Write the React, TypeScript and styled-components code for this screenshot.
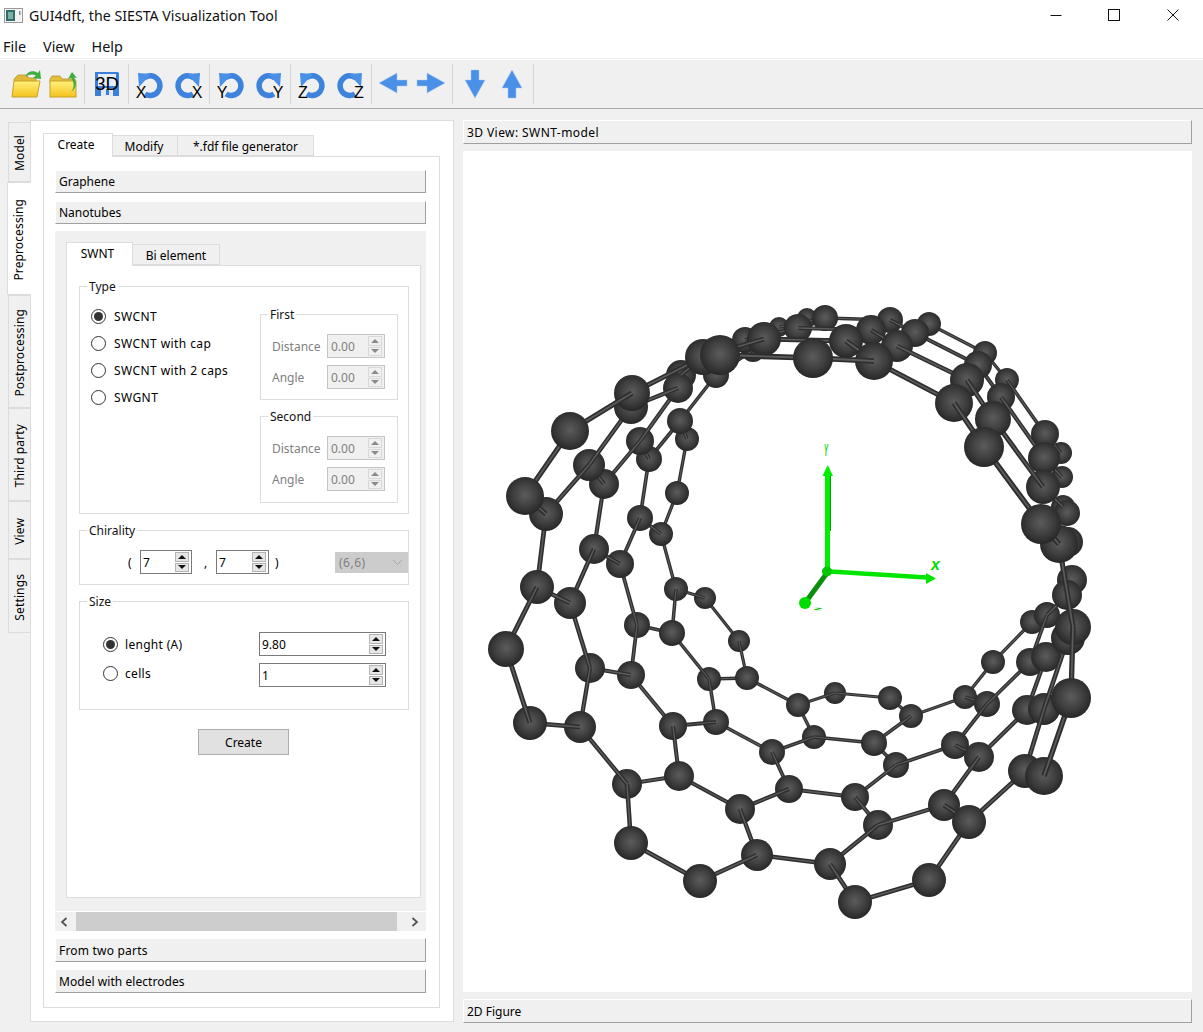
import React from "react";
import styled, { createGlobalStyle } from "styled-components";

const Global = createGlobalStyle`
  html, body { margin: 0; padding: 0; background: #f0f0f0; }
  body { font-family: "Noto Sans", "Open Sans", sans-serif; font-size: 12px; color: #000; }
`;

const Root = styled.div`
  width: 1203px; height: 1032px; display: flex; flex-direction: column; overflow: hidden; background: #f0f0f0;
`;
const TitleBar = styled.div`
  height: 34px; background: #fff; display: flex; align-items: center; padding: 0 1px 4px 4px; box-sizing: border-box;
`;
const TitleText = styled.span`
  font-size: 14.2px; margin-left: 6px; flex: 1; color: #111;
`;
const WinButton = styled.div`
  width: 58.5px; height: 30px; display: flex; align-items: center; justify-content: center;
`;
const MenuBar = styled.div`
  height: 25px; background: #fff; display: flex; gap: 17px; padding: 0 0 0 3px; align-items: center; border-bottom: 1px solid #f0f0f0; box-sizing: border-box; font-size: 14.4px; color: #111;
`;
const ToolBar = styled.div`
  height: 50px; box-sizing: border-box; border-bottom: 1px solid #a9a9a9; border-top: 1px solid #fff; display: flex; align-items: center; background: #f0f0f0;
`;
const ToolGroup = styled.div<{ $w: number; $pl?: number }>`
  width: ${(p) => p.$w}px; box-sizing: border-box; padding-left: ${(p) => p.$pl ?? 0}px; display: flex; justify-content: center;
`;
const ToolCell = styled.div<{ $w: number }>`
  width: ${(p) => p.$w}px; height: 36px; display: flex; justify-content: center;
`;
const ToolSep = styled.div`
  width: 1px; height: 40px; background: #d6d6d6;
`;
const Main = styled.div`
  flex: 1; display: flex; padding: 11px 11px 0 0; min-height: 0;
`;
const VTabs = styled.div`
  width: 30px; padding-top: 2px; box-sizing: border-box; display: flex; flex-direction: column; align-items: flex-end; flex: none;
`;
const VTab = styled.div<{ $h: number; $active?: boolean }>`
  height: ${(p) => p.$h}px; width: ${(p) => (p.$active ? 24 : 22)}px; box-sizing: border-box;
  background: ${(p) => (p.$active ? "#fff" : "#f0f0f0")};
  border: 1px solid #dcdcdc; border-right: ${(p) => (p.$active ? "1px solid #fff" : "none")};
  margin-right: ${(p) => (p.$active ? "-1px" : "0")};
  position: relative; z-index: ${(p) => (p.$active ? 2 : 0)};
  display: flex; align-items: center; justify-content: center; padding-top: 2px;
`;
const VLabel = styled.span`
  writing-mode: vertical-rl; transform: rotate(180deg); white-space: nowrap; font-size: 12px; line-height: 14px; letter-spacing: 0.12px;
`;
const OuterPane = styled.div`
  width: 424px; height: 902px; box-sizing: border-box; background: #fff; border: 1px solid #dcdcdc; padding: 12px 13px 13px 12px; flex: none; display: flex; flex-direction: column;
`;
const TabBar = styled.div`
  display: flex; align-items: flex-end; height: 23px; flex: none;
`;
const Tab = styled.div<{ $w: number; $active?: boolean; $pr?: number }>`
  width: ${(p) => p.$w}px; height: ${(p) => (p.$active ? 24 : 21)}px; box-sizing: border-box;
  background: ${(p) => (p.$active ? "#fff" : "#f0f0f0")};
  border: 1px solid #dcdcdc; border-bottom: ${(p) => (p.$active ? "none" : "1px solid #dcdcdc")};
  border-left: ${(p) => (p.$active ? "1px solid #dcdcdc" : "none")};
  display: flex; align-items: center; justify-content: center; margin-bottom: ${(p) => (p.$active ? "-1px" : "0")};
  position: relative; z-index: ${(p) => (p.$active ? 2 : 0)};
  padding-bottom: ${(p) => (p.$active ? 3 : 0)}px; padding-right: ${(p) => p.$pr ?? 0}px; padding-top: ${(p) => (p.$active ? 0 : 1)}px; white-space: nowrap;
`;
const CreatePane = styled.div`
  flex: 1; border: 1px solid #dcdcdc; background: #fff; padding: 13px 13px 13px 11px; display: flex; flex-direction: column; gap: 7px; min-height: 0;
`;
const BarButton = styled.div<{ $h: number; $mb?: number; $ls?: number }>`
  height: ${(p) => p.$h}px; box-sizing: border-box; flex: none; background: #f0f0f0;
  border-right: 1px solid #a0a0a0; border-bottom: 1px solid #a0a0a0; border-top: 1px solid #fff; border-left: 1px solid #fff;
  margin-bottom: ${(p) => p.$mb ?? 0}px; padding-left: 3px; display: flex; align-items: center; white-space: nowrap;
  letter-spacing: ${(p) => p.$ls ?? 0}px;
`;
const ScrollArea = styled.div`
  height: 700px; flex: none; display: flex; flex-direction: column; background: #f0f0f0;
`;
const ScrollContent = styled.div`
  height: 680px; box-sizing: border-box; padding: 11px 5px 13px 11px; display: flex; flex-direction: column;
`;
const NanoPane = styled.div`
  flex: 1; background: #fff; border: 1px solid #dcdcdc; padding: 12px 0 0 12px; display: flex; flex-direction: column; gap: 8px; width: 355px; box-sizing: border-box;
`;
const Group = styled.fieldset<{ $w: number; $h: number; $pt?: number }>`
  width: ${(p) => p.$w}px; height: ${(p) => p.$h}px; box-sizing: border-box; margin: 0; padding: ${(p) => p.$pt ?? 0}px 0 0 0; border: 1px solid #dcdcdc; min-width: 0; flex: none;
`;
const Legend = styled.legend<{ $ml?: number }>`
  margin-left: ${(p) => p.$ml ?? 7}px; padding: 0 2px; font-size: 12px; line-height: 18px; height: 16px; color: #111;
`;
const TypeBody = styled.div`
  display: flex; height: 100%;
`;
const RadioColumn = styled.div`
  width: 180px; padding: 9px 0 0 11px; box-sizing: border-box; display: flex; flex-direction: column; flex: none;
`;
const RadioRow = styled.div<{ $h: number; $pb?: number; $gap?: number; $ls?: number }>`
  height: ${(p) => p.$h}px; display: flex; align-items: center; gap: ${(p) => p.$gap ?? 8}px; white-space: nowrap; flex: none; padding-bottom: ${(p) => p.$pb ?? 0}px; box-sizing: border-box;
  letter-spacing: ${(p) => p.$ls ?? 0.42}px;
`;
const Radio = styled.span<{ $on?: boolean }>`
  width: 15px; height: 15px; box-sizing: border-box; border: 1px solid #333; border-radius: 50%; background: #fff; display: flex; align-items: center; justify-content: center; flex: none;
  &::after { content: ""; width: 9px; height: 9px; border-radius: 50%; background: ${(p) => (p.$on ? "#333" : "transparent")}; }
`;
const SubColumn = styled.div`
  display: flex; flex-direction: column; gap: 8px; padding-top: 12px; flex: none;
`;
const SubRow = styled.div`
  display: flex; align-items: center; height: 24px; padding-left: 11px; color: #808080;
`;
const SubLabel = styled.span`
  width: 55px; flex: none;
`;
const SubRows = styled.div`
  display: flex; flex-direction: column; gap: 7px;
`;
const SpinBox = styled.div<{ $w: number; $h?: number; $off?: boolean }>`
  width: ${(p) => p.$w}px; height: ${(p) => p.$h ?? 24}px; box-sizing: border-box; flex: none;
  border: 1px solid ${(p) => (p.$off ? "#c4c4c4" : "#7a7a7a")}; background: ${(p) => (p.$off ? "#f0f0f0" : "#fff")};
  color: ${(p) => (p.$off ? "#808080" : "#000")}; display: flex; align-items: center; justify-content: space-between; padding: 1px 1px 1px ${(p) => (p.$off ? 3 : 2)}px;
`;
const SpinButtons = styled.div`
  display: flex; flex-direction: column; gap: 1px; width: 14px; height: 100%; flex: none; margin-right: 1px;
`;
const SpinBtn = styled.div<{ $off?: boolean; $down?: boolean }>`
  flex: 1; box-sizing: border-box; border: 1px solid ${(p) => (p.$off ? "#d8d8d8" : "#b4b4b4")}; background: ${(p) => (p.$off ? "#f0f0f0" : "#e6e6e6")};
  display: flex; align-items: center; justify-content: center;
  &::after { content: ""; width: 0; height: 0; border-left: 4px solid transparent; border-right: 4px solid transparent;
    ${(p) => (p.$down ? "border-top" : "border-bottom")}: 4px solid ${(p) => (p.$off ? "#8a8a8a" : "#111")}; }
`;
const ChiralRow = styled.div`
  display: flex; align-items: center; padding: 12px 0 0 48px; height: 24px;
`;
const Paren = styled.span<{ $w: number; $pl?: number }>`
  width: ${(p) => p.$w}px; padding-left: ${(p) => p.$pl ?? 0}px; box-sizing: border-box; flex: none;
`;
const Combo = styled.div`
  width: 73px; height: 21px; box-sizing: border-box; background: #cccccc; color: #808080; display: flex; align-items: center; justify-content: space-between; padding: 0 5px 0 4px; flex: none; letter-spacing: 0.5px;
`;
const SizeBody = styled.div`
  padding: 23px 0 0 23px; display: flex; flex-direction: column; gap: 7px;
`;
const SizeRow = styled.div`
  display: flex; align-items: center; height: 24px;
`;
const SizeLabel = styled.div`
  width: 156px; flex: none;
`;
const CreateButton = styled.div`
  width: 91px; height: 26px; box-sizing: border-box; background: #e1e1e1; border: 1px solid #adadad; margin: 11px 0 0 119px; display: flex; align-items: center; justify-content: center;
`;
const ScrollBar = styled.div`
  height: 20px; box-sizing: border-box; border-top: 1px solid #fff; display: flex; align-items: stretch; flex: none;
`;
const ScrollEnd = styled.div<{ $w: number; $pl?: number; $pr?: number }>`
  width: ${(p) => p.$w}px; box-sizing: border-box; padding: 0 ${(p) => p.$pr ?? 0}px 0 ${(p) => p.$pl ?? 0}px; display: flex; align-items: center; justify-content: center; flex: none;
`;
const ScrollThumb = styled.div`
  flex: 1; background: #cdcdcd;
`;
const RightColumn = styled.div`
  margin-left: 9px; width: 729px; display: flex; flex-direction: column; gap: 7px; flex: none;
`;
const GLView = styled.div`
  height: 841px; background: #fff; flex: none;
`;
const GLSvg = styled.svg`
  display: block;
`;

const atoms: [number, number, number][] = [
  [570,431,19],[525,496,19],[546,514,17],[632,393,18],[631,407,17],[681,375,15],[678,388,15],[703,357,18],[720,355,20],[716,375,13],
  [745,340,13],[764,339,17],[753,350,12],[779,327,10],[589,465,16],[604,484,15],[640,441,14],[649,459,13],[680,421,13],[687,439,12],
  [677,493,12],[661,534,12],[640,518,13],[620,564,14],[594,549,15],[570,603,16],[537,587,17],[676,589,12],[705,598,11],[506,649,18],
  [530,723,17],[580,727,16],[590,668,15],[631,675,14],[637,625,13],[672,633,13],[739,641,11],[709,679,12],[747,678,12],[673,726,14],
  [716,722,13],[627,784,15],[679,776,15],[772,752,13],[789,789,14],[740,809,15],[757,855,16],[631,843,17],[700,881,17],[798,705,12],
  [1032,622,12],[1047,615,13],[1073,627,18],[1068,638,17],[993,662,12],[1030,662,14],[1046,657,15],[1071,698,20],[1027,710,15],[1044,709,16],
  [1025,771,17],[1044,776,19],[965,697,12],[987,704,13],[955,745,14],[979,757,15],[944,805,16],[969,822,17],[929,880,17],[855,902,17],
  [830,864,16],[878,825,15],[855,797,14],[896,765,13],[874,743,13],[911,716,12],[890,698,12],[835,693,11],[814,737,12],[813,358,20],
  [846,341,17],[874,361,19],[871,330,15],[897,346,16],[915,333,14],[890,320,13],[929,324,12],[798,328,14],[825,318,13],[807,318,10],
  [985,353,12],[978,365,14],[967,380,17],[954,403,19],[1007,380,12],[1001,397,14],[993,419,18],[984,447,20],[1045,434,14],[1044,458,16],
  [1061,453,11],[1043,487,17],[1062,477,11],[1041,524,20],[1059,544,19],[1063,507,12],[1067,513,13],[1068,542,15],[1072,580,15],[1067,595,15],
];

const bonds: number[][] = [
  [570,431,525,496],[570,431,632,393],[632,393,703,357],[631,407,678,388],[525,496,546,514],[546,514,589,465],[589,465,631,407],[604,484,640,441],
  [640,441,678,388],[649,459,680,421],[680,421,716,375],[687,439,677,493],[677,493,661,534],[649,459,640,518],[640,518,620,564],[604,484,594,549],
  [594,549,570,603],[546,514,537,587],[537,587,570,603],[594,549,620,564],[640,518,661,534],[661,534,676,589],[676,589,705,598],[604,484,589,465],
  [649,459,640,441],[687,439,680,421],[537,587,506,649],[506,649,530,723],[530,723,580,727],[570,603,590,668],[590,668,580,727],[590,668,631,675],
  [620,564,637,625],[637,625,631,675],[637,625,672,633],[676,589,672,633],[705,598,739,641],[739,641,747,678],[672,633,709,679],[709,679,747,678],
  [709,679,716,722],[631,675,673,726],[673,726,716,722],[673,726,679,776],[580,727,627,784],[627,784,679,776],[627,784,631,843],[631,843,700,881],
  [700,881,757,855],[757,855,740,809],[740,809,679,776],[740,809,789,789],[789,789,772,752],[772,752,716,722],[772,752,814,737],[814,737,798,705],
  [798,705,747,678],[798,705,835,693],[835,693,890,698],[890,698,911,716],[911,716,965,697],[965,697,987,704],[965,697,993,662],[993,662,1032,622],
  [987,704,1030,662],[987,704,955,745],[955,745,979,757],[955,745,896,765],[896,765,874,743],[874,743,911,716],[874,743,814,737],[896,765,855,797],
  [855,797,789,789],[855,797,878,825],[878,825,944,805],[944,805,969,822],[944,805,979,757],[979,757,1027,710],[969,822,1025,771],[878,825,830,864],
  [830,864,757,855],[830,864,855,902],[855,902,929,880],[929,880,969,822],[1025,771,1044,709],[1044,776,1071,698],[1027,710,1046,657],[1044,709,1068,638],
  [1071,698,1073,627],[1030,662,1047,615],[1041,524,984,447],[1043,487,993,419],[1044,458,1001,397],[1045,434,1007,380],[954,403,874,361],[967,380,897,346],
  [978,365,915,333],[985,353,929,324],[954,403,984,447],[967,380,993,419],[978,365,1001,397],[985,353,1007,380],[1041,524,1059,544],[1043,487,1063,507],
  [1044,458,1062,477],[1045,434,1061,453],[1059,544,1073,627],[720,355,813,358],[813,358,874,361],[764,339,846,341],[825,318,890,320],[798,328,871,330],
  [846,341,874,361],[871,330,897,346],[890,320,915,333],[703,357,764,339],[745,340,798,328],[716,375,753,350],[681,375,703,357],[779,327,825,318],
  [1067,595,1047,615],[1072,580,1067,595],
];

const radiusAt = (x: number, y: number) => atoms.find((a) => a[0] === x && a[1] === y)?.[2] ?? 12;

type Prim = { depth: number; key: string; el: React.ReactNode };
const prims: Prim[] = [
  ...bonds.map((b, i) => {
    const d = (radiusAt(b[0], b[1]) + radiusAt(b[2], b[3])) / 2;
    return {
      depth: d - 0.1,
      key: `b${i}`,
      el: (
        <g key={`b${i}`}>
          <line x1={b[0]} y1={b[1]} x2={b[2]} y2={b[3]} stroke="#2e2e2e" strokeWidth={d * 0.28} />
          <line x1={b[0]} y1={b[1]} x2={b[2]} y2={b[3]} stroke="#5c5c5c" strokeWidth={d * 0.09} />
        </g>
      ),
    };
  }),
  ...atoms.map((a, i) => ({
    depth: a[2],
    key: `a${i}`,
    el: <circle key={`a${i}`} cx={a[0]} cy={a[1]} r={a[2]} fill="url(#atom)" />,
  })),
].sort((p, q) => p.depth - q.depth);

const Molecule = () => (
  <GLSvg width={729} height={841} viewBox="463 151 729 841">
    <defs>
      <radialGradient id="atom" cx="0.5" cy="0.47" r="0.52">
        <stop offset="0" stopColor="#5c5c5c" />
        <stop offset="0.55" stopColor="#414141" />
        <stop offset="1" stopColor="#282828" />
      </radialGradient>
    </defs>
    {prims.map((p) => p.el)}
    <line x1={827} y1={573} x2={805} y2={603} stroke="#0b8f0b" strokeWidth={5} />
    <circle cx={805} cy={603} r={6} fill="#00dd00" />
    <line x1={830.5} y1={476} x2={830.5} y2={531} stroke="#0a9a0a" strokeWidth={1} />
    <line x1={827.5} y1={474} x2={827.5} y2={571} stroke="#00ee00" strokeWidth={5} />
    <polygon points="827.7,465 822.5,476 833,476" fill="#00ee00" />
    <line x1={830} y1={571.5} x2={927} y2={577.5} stroke="#00e600" strokeWidth={4.5} />
    <polygon points="936,578.5 926,573 926,584" fill="#00e600" />
    <circle cx={827} cy={571.5} r={5} fill="#00c800" />
    <text x={0} y={0} transform="translate(824 456) scale(0.35 1)" fontSize={17} fontFamily="Liberation Sans" fontStyle="italic" fontWeight={700} fill="#00dd00">Y</text>
    <text x={931} y={570} fontSize={16} fontFamily="Liberation Sans" fontStyle="italic" fontWeight={700} fill="#00dd00">x</text>
    <text x={0} y={0} transform="translate(813 610) scale(1.3 0.35) rotate(10)" fontSize={13} fontFamily="Liberation Sans" fontWeight={700} fill="#00bb00">z</text>
  </GLSvg>
);

const Folder = ({ variant }: { variant: number }) => (
  <svg width={36} height={36} viewBox="0 0 36 36">
    <defs>
      <linearGradient id={`fold${variant}`} x1="0" y1="0" x2="0" y2="1">
        <stop offset="0" stopColor="#fff27a" />
        <stop offset="1" stopColor="#f4c21d" />
      </linearGradient>
    </defs>
    {variant === 0 ? (
      <>
        <path d="M6 13 L10 9 H18 L21 12 H28 V16 H6 Z" fill="#e0b93a" stroke="#b9952a" strokeWidth={0.8} />
        <path d="M6 15 H32 L29 31 H4 Z" fill={`url(#fold${variant})`} stroke="#c9a02b" strokeWidth={1} />
        <path d="M18 9 C20 5 26 4 30 7 L32 4 L33 13 L25 12 L28 9.5 C25 8 21 8 18 11 Z" fill="#3fae3f" />
      </>
    ) : (
      <>
        <path d="M5 13 L7 10 H15 L17 13 H30 V17 H5 Z" fill="#e3bd3c" stroke="#b9952a" strokeWidth={0.8} />
        <rect x={5} y={15} width={26} height={16} fill={`url(#fold${variant})`} stroke="#c9a02b" strokeWidth={1} />
        <path d="M26 26 C30 22 29 15 26 12 L23 13 L27 6 L32 12 L29 11.5 C32 16 32 22 26 26 Z" fill="#3fae3f" />
      </>
    )}
  </svg>
);

const Floppy = () => (
  <svg width={36} height={36} viewBox="0 0 36 36">
    <path d="M6 6 H29 L30 7 V30 H6 Z" fill="#3b80d8" />
    <rect x={9} y={8} width={18} height={12} fill="#e4edf9" />
    <rect x={12} y={22} width={12} height={8} fill="#e4e9f0" />
    <rect x={17} y={23} width={3} height={6} fill="#3b80d8" />
    <text x={18} y={24} textAnchor="middle" fontSize={18.5} fontFamily="Liberation Sans" fill="#000">3D</text>
  </svg>
);

const Rotate = ({ letter, redo }: { letter: string; redo?: boolean }) => (
  <svg width={36} height={36} viewBox="0 0 36 36">
    <g transform={redo ? "translate(36 0) scale(-1 1)" : undefined}>
      <path d="M13 12 A 9.8 9.8 0 1 1 14 28" fill="none" stroke="#3d83dc" strokeWidth={5.5} />
      <polygon points="7,7 20,8 8,21" fill="#4a90e6" />
    </g>
    <text x={redo ? 26 : 10} y={32} textAnchor="middle" fontSize={16} fontFamily="Liberation Sans" fill="#000">{letter}</text>
  </svg>
);

const Arrow = ({ dir }: { dir: "left" | "right" | "down" | "up" }) => {
  const h = "3,17 21,7 21,14 31,14 31,20 21,20 21,27";
  const v = "14,4 22,4 22,14 28,14 18,32 8,14 14,14";
  const t = dir === "right" ? "translate(36 0) scale(-1 1)" : dir === "up" ? "translate(0 36) scale(1 -1)" : undefined;
  return (
    <svg width={36} height={36} viewBox="0 0 36 36">
      <g transform={t}>
        <polygon points={dir === "left" || dir === "right" ? h : v} fill="#4a8fe8" stroke="#a9c8f0" strokeWidth={0.5} />
      </g>
    </svg>
  );
};

const Spin = ({ v, w, h, off }: { v: string; w: number; h?: number; off?: boolean }) => (
  <SpinBox $w={w} $h={h} $off={off}>
    <span>{v}</span>
    <SpinButtons>
      <SpinBtn $off={off} />
      <SpinBtn $off={off} $down />
    </SpinButtons>
  </SpinBox>
);

const SubGroup = ({ title, h, pt }: { title: string; h: number; pt: number }) => (
  <Group $w={138} $h={h} $pt={pt}>
    <Legend>{title}</Legend>
    <SubRows>
      <SubRow>
        <SubLabel>Distance</SubLabel>
        <Spin v="0.00" w={58} off />
      </SubRow>
      <SubRow>
        <SubLabel>Angle</SubLabel>
        <Spin v="0.00" w={58} off />
      </SubRow>
    </SubRows>
  </Group>
);

const Chevron = ({ right }: { right?: boolean }) => (
  <svg width={10} height={10} viewBox="0 0 10 10">
    <path d={right ? "M2.5 1 L7 5 L2.5 9" : "M7.5 1 L3 5 L7.5 9"} fill="none" stroke="#505050" strokeWidth={1.7} />
  </svg>
);

const vtabs = [
  { t: "Model", h: 60 },
  { t: "Preprocessing", h: 113, active: true },
  { t: "Postprocessing", h: 113 },
  { t: "Third party", h: 93 },
  { t: "View", h: 58 },
  { t: "Settings", h: 74 },
];

export default function App() {
  return (
    <Root>
      <Global />
      <TitleBar>
        <svg width={19} height={15} viewBox="0 0 19 15">
          <rect x={0.5} y={0.5} width={18} height={14} fill="#f4f4f4" stroke="#9a9a9a" />
          <rect x={2} y={2} width={9} height={11} fill="#2f6f6a" />
          <rect x={4} y={4} width={5} height={7} fill="#7fb0a8" />
          <rect x={15} y={3} width={1.5} height={4} fill="#7a9a9a" />
        </svg>
        <TitleText>GUI4dft, the SIESTA Visualization Tool</TitleText>
        <WinButton>
          <svg width={12} height={12} viewBox="0 0 12 12"><line x1={0.5} y1={6.5} x2={11.5} y2={6.5} stroke="#111" /></svg>
        </WinButton>
        <WinButton>
          <svg width={12} height={12} viewBox="0 0 12 12"><rect x={0.5} y={0.5} width={11} height={11} fill="none" stroke="#111" /></svg>
        </WinButton>
        <WinButton>
          <svg width={12} height={12} viewBox="0 0 12 12"><path d="M0.5 0.5 L11.5 11.5 M11.5 0.5 L0.5 11.5" stroke="#111" /></svg>
        </WinButton>
      </TitleBar>
      <MenuBar>
        <span>File</span>
        <span>View</span>
        <span>Help</span>
      </MenuBar>
      <ToolBar>
        <ToolGroup $w={84} $pl={4}>
          <ToolCell $w={37}><Folder variant={0} /></ToolCell>
          <ToolCell $w={37}><Folder variant={1} /></ToolCell>
        </ToolGroup>
        <ToolSep />
        <ToolGroup $w={43}><ToolCell $w={37}><Floppy /></ToolCell></ToolGroup>
        <ToolSep />
        <ToolGroup $w={80}>
          <ToolCell $w={40}><Rotate letter="X" /></ToolCell>
          <ToolCell $w={40}><Rotate letter="X" redo /></ToolCell>
        </ToolGroup>
        <ToolSep />
        <ToolGroup $w={80}>
          <ToolCell $w={40}><Rotate letter="Y" /></ToolCell>
          <ToolCell $w={40}><Rotate letter="Y" redo /></ToolCell>
        </ToolGroup>
        <ToolSep />
        <ToolGroup $w={80}>
          <ToolCell $w={40}><Rotate letter="Z" /></ToolCell>
          <ToolCell $w={40}><Rotate letter="Z" redo /></ToolCell>
        </ToolGroup>
        <ToolSep />
        <ToolGroup $w={80}>
          <ToolCell $w={36}><Arrow dir="left" /></ToolCell>
          <ToolCell $w={36}><Arrow dir="right" /></ToolCell>
        </ToolGroup>
        <ToolSep />
        <ToolGroup $w={80}>
          <ToolCell $w={37}><Arrow dir="down" /></ToolCell>
          <ToolCell $w={37}><Arrow dir="up" /></ToolCell>
        </ToolGroup>
        <ToolSep />
      </ToolBar>
      <Main>
        <VTabs>
          {vtabs.map((t) => (
            <VTab key={t.t} $h={t.h} $active={t.active}>
              <VLabel>{t.t}</VLabel>
            </VTab>
          ))}
        </VTabs>
        <OuterPane>
          <TabBar>
            <Tab $w={70} $active $pr={4}>Create</Tab>
            <Tab $w={65} $pr={2}>Modify</Tab>
            <Tab $w={136}>*.fdf file generator</Tab>
          </TabBar>
          <CreatePane>
            <BarButton $h={23} $mb={1}>Graphene</BarButton>
            <BarButton $h={23}>Nanotubes</BarButton>
            <ScrollArea>
              <ScrollContent>
                <TabBar>
                  <Tab $w={67} $active $pr={4}>SWNT</Tab>
                  <Tab $w={87}>Bi element</Tab>
                </TabBar>
                <NanoPane>
                  <Group $w={330} $h={236}>
                    <Legend>Type</Legend>
                    <TypeBody>
                      <RadioColumn>
                        <RadioRow $h={27}><Radio $on />SWCNT</RadioRow>
                        <RadioRow $h={27}><Radio />SWCNT with cap</RadioRow>
                        <RadioRow $h={27}><Radio />SWCNT with 2 caps</RadioRow>
                        <RadioRow $h={27}><Radio />SWGNT</RadioRow>
                      </RadioColumn>
                      <SubColumn>
                        <SubGroup title="First" h={94} pt={12} />
                        <SubGroup title="Second" h={95} pt={12} />
                      </SubColumn>
                    </TypeBody>
                  </Group>
                  <Group $w={330} $h={63}>
                    <Legend>Chirality</Legend>
                    <ChiralRow>
                      <Paren $w={12}>(</Paren>
                      <Spin v="7" w={52} />
                      <Paren $w={24} $pl={12}>,</Paren>
                      <Spin v="7" w={53} />
                      <Paren $w={66} $pl={6}>)</Paren>
                      <Combo>
                        <span>(6,6)</span>
                        <svg width={11} height={7} viewBox="0 0 11 7"><path d="M1 1 L5.5 5.5 L10 1" fill="none" stroke="#a8a8a8" /></svg>
                      </Combo>
                    </ChiralRow>
                  </Group>
                  <Group $w={330} $h={117}>
                    <Legend>Size</Legend>
                    <SizeBody>
                      <SizeRow>
                        <SizeLabel><RadioRow $h={24} $gap={7} $ls={0.3}><Radio $on />lenght (A)</RadioRow></SizeLabel>
                        <Spin v="9.80" w={127} />
                      </SizeRow>
                      <SizeRow>
                        <SizeLabel><RadioRow $h={24} $pb={4} $gap={7} $ls={0.3}><Radio />cells</RadioRow></SizeLabel>
                        <Spin v="1" w={127} />
                      </SizeRow>
                    </SizeBody>
                  </Group>
                  <CreateButton>Create</CreateButton>
                </NanoPane>
              </ScrollContent>
              <ScrollBar>
                <ScrollEnd $w={21} $pr={3}><Chevron /></ScrollEnd>
                <ScrollThumb />
                <ScrollEnd $w={29} $pl={7}><Chevron right /></ScrollEnd>
              </ScrollBar>
            </ScrollArea>
            <BarButton $h={24} $ls={0.2}>From two parts</BarButton>
            <BarButton $h={24} $ls={0.05}>Model with electrodes</BarButton>
          </CreatePane>
        </OuterPane>
        <RightColumn>
          <BarButton $h={24} $ls={0.42}>3D View: SWNT-model</BarButton>
          <GLView><Molecule /></GLView>
          <BarButton $h={24}>2D Figure</BarButton>
        </RightColumn>
      </Main>
    </Root>
  );
}
